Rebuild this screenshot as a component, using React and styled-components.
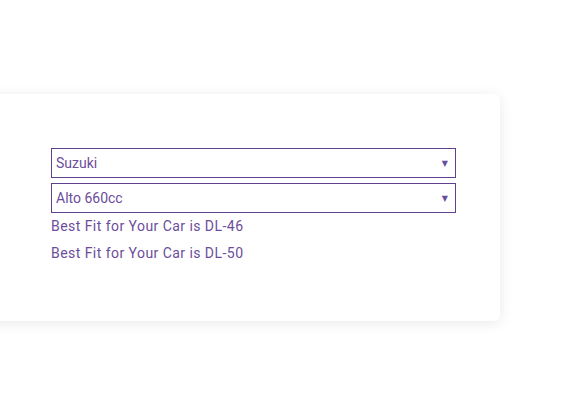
import React from 'react'
import styled, { createGlobalStyle } from 'styled-components';

const GlobalStyle = createGlobalStyle`
  html, body {
    margin: 0;
    padding: 0;
    background: #fff;
    font-family: Roboto, "Liberation Sans", sans-serif;
  }
`;

function Select({ value }) {
  return (
    <SelectBox>
      <span>{value}</span>
      <Arrow>▼</Arrow>
    </SelectBox>
  )
}

function App() {
  return (
    <Page>
      <GlobalStyle />
      <Card>
        <Select value="Suzuki" />
        <Select value="Alto 660cc" />
        <Result>Best Fit for Your Car is DL-46</Result>
        <Result>Best Fit for Your Car is DL-50</Result>
      </Card>
    </Page>
  )
}

const Page = styled.div`
  width: 579px;
  height: 396px;
  overflow: hidden;
  padding-top: 94px;
  box-sizing: border-box;
`;

const Card = styled.div`
  margin-left: -30px;
  width: 530px;
  height: 227px;
  box-sizing: border-box;
  padding: 54px 0 0 81px;
  background: #fff;
  border-radius: 6px;
  box-shadow: 0 2px 14px rgba(0, 0, 0, 0.09);
  display: flex;
  flex-direction: column;
`;

const SelectBox = styled.div`
  width: 405px;
  height: 30px;
  box-sizing: border-box;
  border: 1px solid #5f4190;
  display: flex;
  align-items: center;
  justify-content: space-between;
  padding: 0 7px 0 4px;
  margin-bottom: 5px;
  font-size: 14px;
  color: #6b4e9b;
`;

const Arrow = styled.span`
  font-size: 8px;
  color: #6b4e9b;
  font-family: "DejaVu Sans", sans-serif;
`;

const Result = styled.div`
  font-size: 14px;
  line-height: 27px;
  color: #6b4e9b;
  letter-spacing: 0.45px;
  margin-top: -5px;
  & + & {
    margin-top: 0;
  }
`;

export default App;
